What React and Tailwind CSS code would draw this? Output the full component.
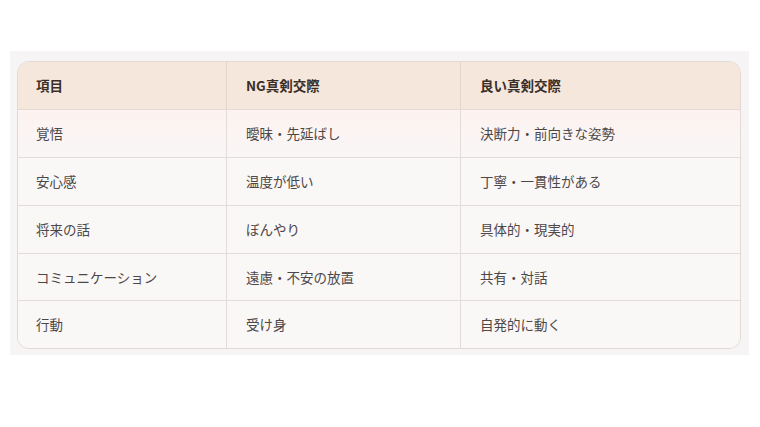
const rows = [
  ['覚悟', '曖昧・先延ばし', '決断力・前向きな姿勢'],
  ['安心感', '温度が低い', '丁寧・一貫性がある'],
  ['将来の話', 'ぼんやり', '具体的・現実的'],
  ['コミュニケーション', '遠慮・不安の放置', '共有・対話'],
  ['行動', '受け身', '自発的に動く'],
];

function App() {
  return (
    <div className="w-[760px] h-[427px] bg-white pt-[51px] pl-[10px]" style={{ fontFamily: '"Noto Sans CJK JP", "Noto Sans", sans-serif' }}>
      <div className="w-[739px] h-[304px] bg-[#f6f4f4] pt-[10px] pl-[7px]">
        <div className="w-[724px] rounded-[12px] border border-[#e2d9d5] overflow-hidden bg-[#faf7f7]">
          <div className="grid grid-cols-[209px_234px_1fr] h-[48px] bg-[#f6e7dd] border-b border-[#e6dad3] text-[13.5px] font-bold text-[#3a2f28]">
            <div className="flex items-center pl-[18px] border-r border-[#e2d6cf]">項目</div>
            <div className="flex items-center pl-[19px] border-r border-[#e2d6cf]">NG真剣交際</div>
            <div className="flex items-center pl-[19px]">良い真剣交際</div>
          </div>
          {rows.map((r, i) => (
            <div
              key={i}
              className={`grid grid-cols-[209px_234px_1fr] text-[13.5px] text-[#4d4847] ${i < 3 ? 'h-[48px]' : 'h-[47px]'} ${i === 0 ? 'bg-gradient-to-b from-[#fdf3f0] to-[#f9f6f7]' : 'bg-[#faf7f7]'} ${i < rows.length - 1 ? 'border-b border-[#e3dcda]' : ''}`}
            >
              <div className="flex items-center pl-[18px] border-r border-[#e3dcda]">{r[0]}</div>
              <div className="flex items-center pl-[19px] border-r border-[#e3dcda]">{r[1]}</div>
              <div className="flex items-center pl-[19px]">{r[2]}</div>
            </div>
          ))}
        </div>
      </div>
    </div>
  );
}

export default App;
